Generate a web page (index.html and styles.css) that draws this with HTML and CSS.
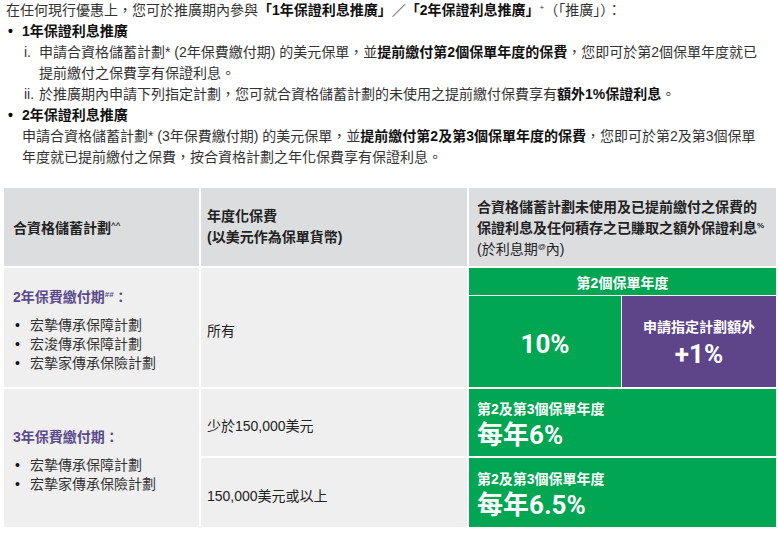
FILE: index.html
```html
<!DOCTYPE html>
<html lang="zh-Hant">
<head>
<meta charset="utf-8">
<link rel="stylesheet" href="styles.css">
</head>
<body>
<div class="intro">
  <p class="line">在任何現行優惠上，您可於推廣期內參與<b>「1年保證利息推廣」</b>／<b>「2年保證利息推廣」</b><sup class="sup">+</sup>（「推廣」）：</p>
  <div class="bullet">
    <span class="dot">•</span>
    <div class="bbody">
      <p class="line"><b>1年保證利息推廣</b></p>
      <div class="roman">
        <span class="num">i.</span>
        <p class="line">申請合資格儲蓄計劃* (2年保費繳付期) 的美元保單，並<b>提前繳付第2個保單年度的保費</b>，您即可於第2個保單年度就已<br>提前繳付之保費享有保證利息。</p>
      </div>
      <div class="roman">
        <span class="num">ii.</span>
        <p class="line">於推廣期內申請下列指定計劃，您可就合資格儲蓄計劃的未使用之提前繳付保費享有<b>額外1%保證利息</b>。</p>
      </div>
    </div>
  </div>
  <div class="bullet">
    <span class="dot">•</span>
    <div class="bbody">
      <p class="line"><b>2年保證利息推廣</b></p>
      <p class="line">申請合資格儲蓄計劃* (3年保費繳付期) 的美元保單，並<b>提前繳付第2及第3個保單年度的保費</b>，您即可於第2及第3個保單<br>年度就已提前繳付之保費，按合資格計劃之年化保費享有保證利息。</p>
    </div>
  </div>
</div>

<div class="tbl">
  <div class="cell head c1"><div><b>合資格儲蓄計劃<sup class="sup">^^</sup></b></div></div>
  <div class="cell head c2"><div><b>年度化保費<br>(以美元作為保單貨幣)</b></div></div>
  <div class="cell head c3"><div><b>合資格儲蓄計劃未使用及已提前繳付之保費的<br>保證利息及任何積存之已賺取之額外保證利息<sup class="sup">%</sup></b><br>(於利息期<sup class="sup">@</sup>內)</div></div>

  <div class="cell body plan r1">
    <div class="plan-title">2年保費繳付期<sup class="sup">##</sup>：</div>
    <ul class="plans">
      <li>宏摯傳承保障計劃</li>
      <li>宏浚傳承保障計劃</li>
      <li>宏摯家傳承保險計劃</li>
    </ul>
  </div>
  <div class="cell body prem r1">所有</div>
  <div class="rate-grid r1">
    <div class="g-head">第2個保單年度</div>
    <div class="g-big">10%</div>
    <div class="p-big"><span class="p-label">申請指定計劃額外</span><span class="p-num">+1%</span></div>
  </div>

  <div class="cell body plan r2">
    <div class="plan-title">3年保費繳付期：</div>
    <ul class="plans">
      <li>宏摯傳承保障計劃</li>
      <li>宏摯家傳承保險計劃</li>
    </ul>
  </div>
  <div class="cell body prem r2a">少於150,000美元</div>
  <div class="green r2a"><span class="g-label">第2及第3個保單年度</span><span class="g-num">每年6%</span></div>
  <div class="cell body prem r2b">150,000美元或以上</div>
  <div class="green r2b"><span class="g-label">第2及第3個保單年度</span><span class="g-num">每年6.5%</span></div>
</div>
</body>
</html>
```

FILE: styles.css
```css
html, body {
  margin: 0;
  padding: 0;
  background: #ffffff;
}
body {
  font-family: "Liberation Sans", "Noto Sans CJK TC", sans-serif;
  font-size: 14px;
  color: #333333;
  width: 778px;
}
b {
  color: #111111;
  font-weight: bold;
}
.sup {
  font-size: 8px;
  vertical-align: 5px;
  line-height: 0;
}
.intro {
  padding: 0 0 0 6px;
}
.line {
  margin: 0;
  line-height: 21px;
  white-space: nowrap;
}
.bullet {
  display: flex;
}
.dot {
  width: 14px;
  padding-left: 2px;
  line-height: 21px;
  color: #000;
  font-weight: bold;
  flex: none;
}
.bbody {
  display: flex;
  flex-direction: column;
}
.roman {
  display: flex;
}
.num {
  width: 15px;
  padding-left: 2px;
  line-height: 21px;
  flex: none;
}
.tbl {
  margin: 20px 0 0 4px;
  display: grid;
  grid-template-columns: 195px 266px 307px;
  grid-template-rows: 78px 119px 67px 69px;
  gap: 2px;
}
.cell {
  display: flex;
  flex-direction: column;
  justify-content: center;
}
.head {
  background: #dcdddf;
  color: #222;
  line-height: 21px;
}
.head b { color: #222; }
.c1 { padding-left: 9px; padding-top: 2px; }
.c2 { padding-left: 6px; }
.c3 { padding-left: 8px; padding-top: 2px; }
.body {
  background: #efefef;
  color: #222;
}
.r1 { grid-row: 2; }
.r2 { grid-row: 3 / span 2; }
.r2a { grid-row: 3; }
.r2b { grid-row: 4; }
.plan { grid-column: 1; padding-left: 9px; padding-top: 4px; }
.prem { grid-column: 2; padding-left: 6px; padding-top: 4px; }
.plan-title {
  color: #5b4a8c;
  font-weight: bold;
  line-height: 20px;
  margin-bottom: 9px;
}
.plans {
  list-style: none;
  margin: 0;
  padding: 0;
  color: #333;
}
.plans li {
  line-height: 19px;
  display: flex;
}
.plans li::before {
  content: "•";
  width: 15px;
  padding-left: 2px;
  color: #111;
}
.rate-grid {
  grid-column: 3;
  display: grid;
  grid-template-columns: 152px 154px;
  grid-template-rows: 27px 91px;
  gap: 1px;
  background: #ffffff;
}
.g-head {
  grid-column: 1 / span 2;
  background: #00a651;
  color: #fff;
  font-weight: bold;
  display: flex;
  align-items: center;
  justify-content: center;
  padding-top: 1px;
}
.g-big {
  background: #00a651;
  color: #fff;
  font-weight: bold;
  font-size: 26px;
  display: flex;
  align-items: center;
  justify-content: center;
  padding-top: 4px;
  font-family: "Roboto", "Liberation Sans", sans-serif;
}
.p-big {
  background: #5e4489;
  color: #fff;
  display: flex;
  flex-direction: column;
  align-items: center;
  justify-content: center;
  font-weight: bold;
  padding-top: 2px;
}
.p-label {
  line-height: 22px;
}
.p-num {
  font-size: 26px;
  line-height: 32px;
  font-family: "Roboto", "Liberation Sans", sans-serif;
}
.green {
  grid-column: 3;
  background: #00a651;
  color: #fff;
  font-weight: bold;
  display: flex;
  flex-direction: column;
  justify-content: center;
  padding-left: 8px;
  padding-top: 4px;
}
.g-label {
  line-height: 20px;
}
.g-num {
  font-size: 26px;
  line-height: 32px;
  font-family: "Roboto", "Noto Sans CJK TC", sans-serif;
}
```
